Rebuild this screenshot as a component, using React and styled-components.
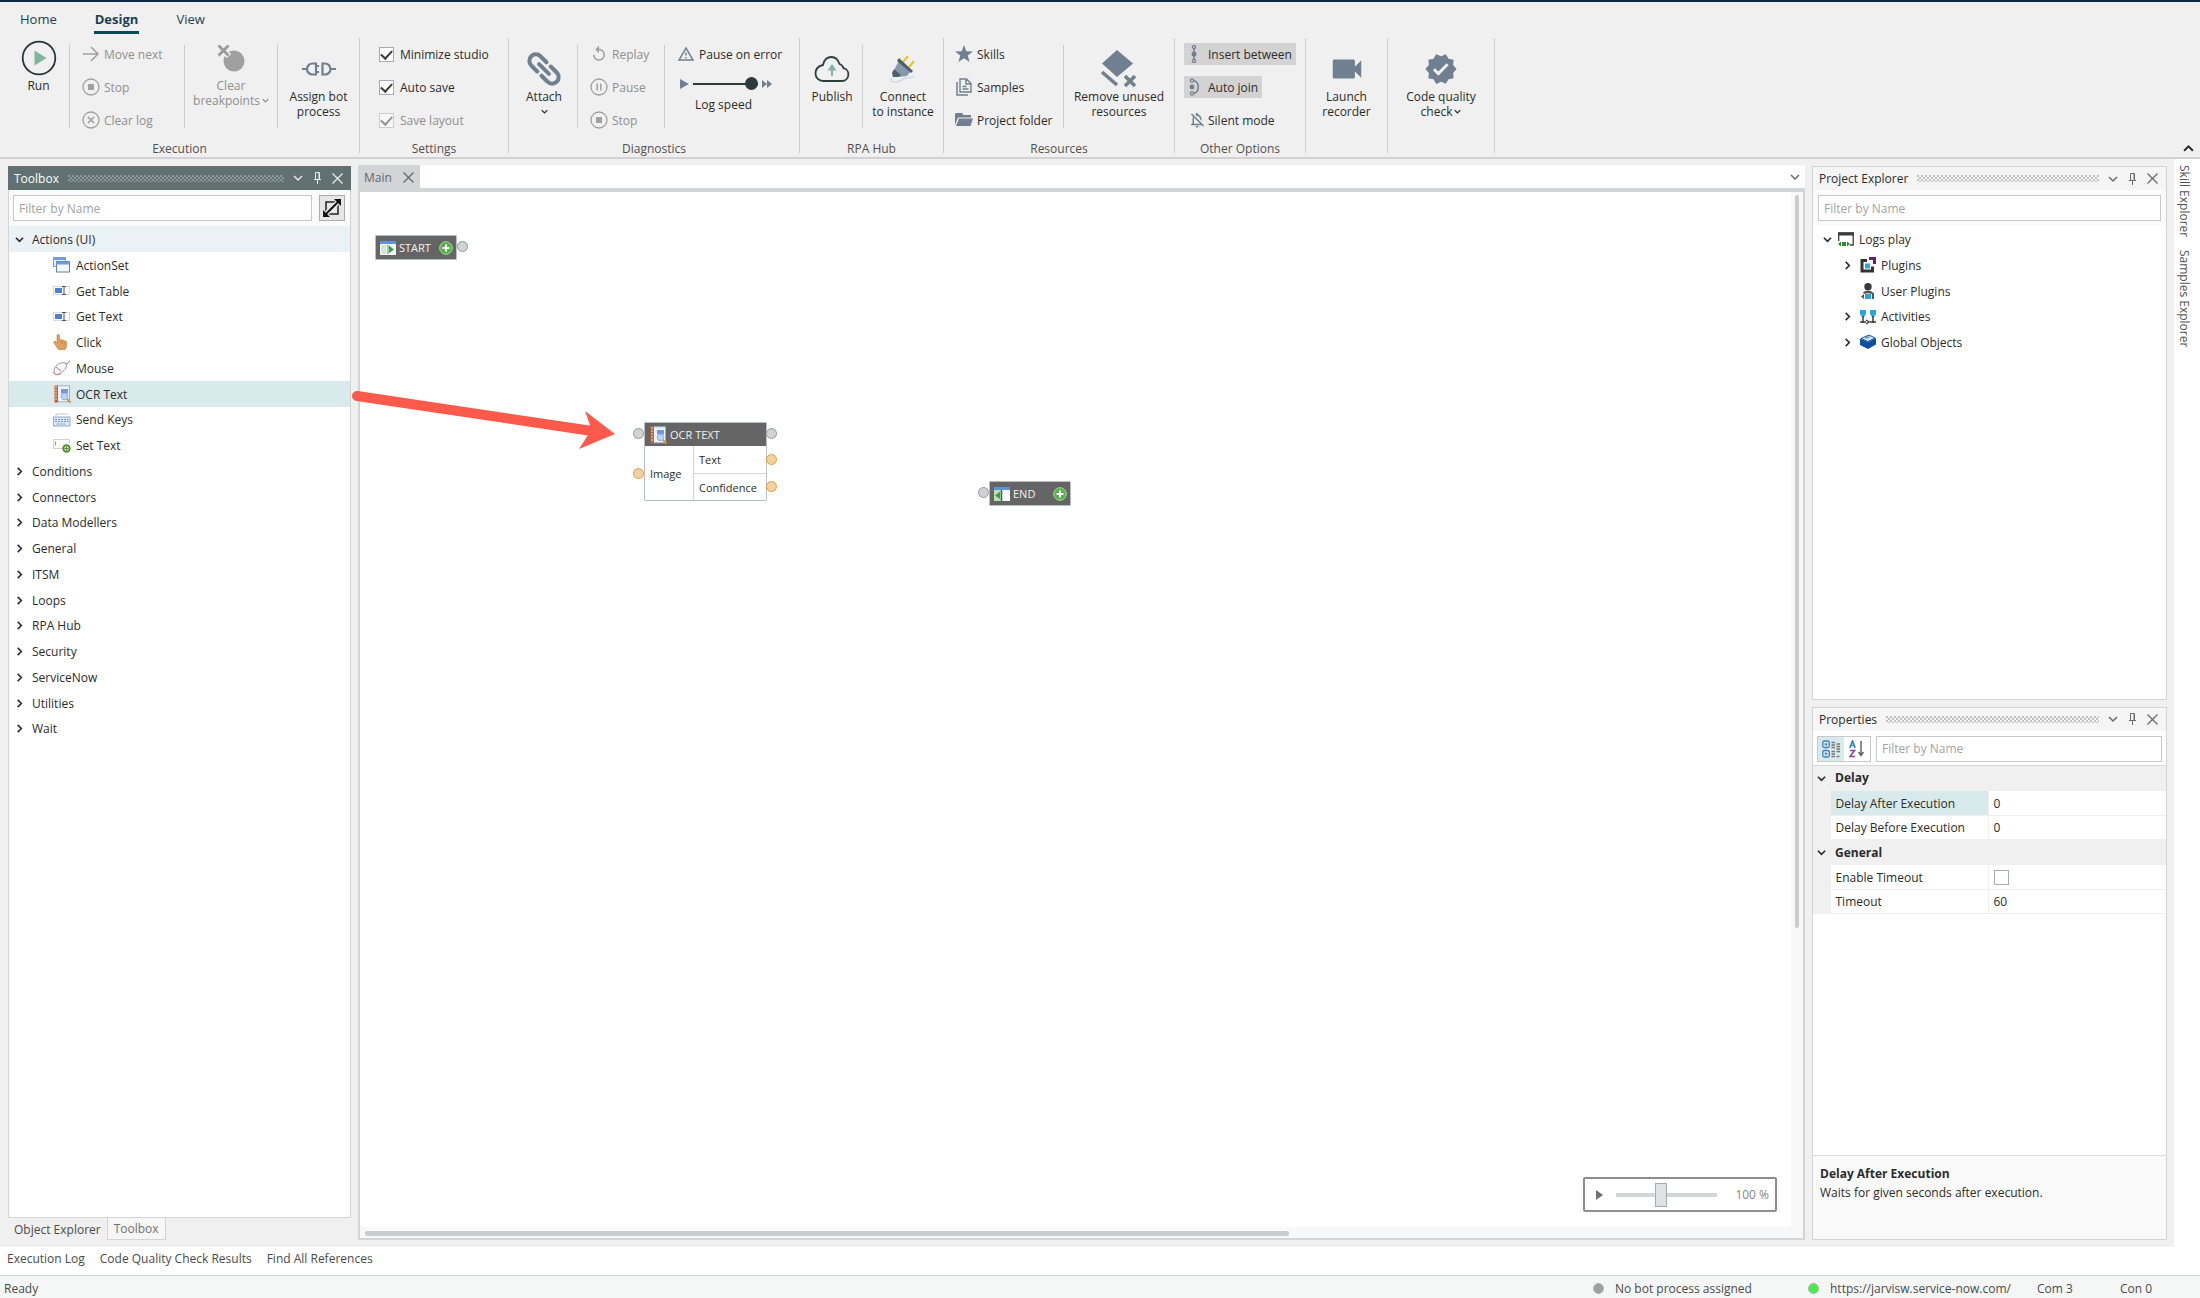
import React from 'react';
import styled, { createGlobalStyle } from 'styled-components';
import { MdVideocam, MdVerified, MdReplay, MdOutlineNotificationsOff, MdOutlineWarningAmber } from 'react-icons/md';

const Colors = {
    chrome: '#f0f0f0',
    rule: '#cdcdcf',
    border: '#d3d4d6',
    slate: '#708090',
    ink: '#2b2b2b',
    muted: '#8f8f8f',
    select: '#d9eaed',
};

const GlobalStyle = createGlobalStyle`
    * {
        box-sizing: border-box;
    }

    body {
        margin: 0;
        background: ${Colors.chrome};
        color: ${Colors.ink};
        font-family: 'Open Sans', 'Noto Sans', sans-serif;
        font-size: 12px;
        line-height: 15px;
    }

    button, input {
        font: inherit;
        color: inherit;
        margin: 0;
    }

    button {
        padding: 0;
        border: 0;
        background: none;
        white-space: nowrap;
    }

    svg {
        display: block;
        flex-shrink: 0;
    }
`;

const Page = styled.div`
    display: flex;
    flex-direction: column;
    min-height: 100vh;
    border-top: 2px solid #0b2942;
`;

/* ---------- ribbon ---------- */

const TabBar = styled.nav`
    display: flex;
    gap: 36px;
    height: 36px;
    padding: 4px 19px 0;
`;

const RibbonTab = styled.button`
    height: 28px;
    padding: 0 1px;
    font-size: 13px;
    line-height: 22px;
    color: #1f3f52;
    font-weight: ${props => props.$active ? 700 : 400};
    border-bottom: 3px solid ${props => props.$active ? '#06495a' : 'transparent'};
`;

const Ribbon = styled.div`
    display: flex;
    height: 121px;
    border-bottom: 2px solid #d2d2d2;
`;

const Spacer = styled.div`
    flex: 1;
`;

const GroupBox = styled.section`
    display: flex;
    flex-direction: column;
`;

const GroupBody = styled.div`
    display: flex;
    height: 103px;
`;

const GroupLabel = styled.div`
    line-height: 16px;
    text-align: center;
    font-size: 12px;
    color: #505050;
`;

const GroupRule = styled.div`
    width: 1px;
    height: 115px;
    background: ${Colors.rule};
`;

const InnerRule = styled.div`
    width: 1px;
    height: 83px;
    margin-top: 7px;
    background: ${Colors.rule};
`;

const Stack = styled.div`
    display: flex;
    flex-direction: column;
    align-items: flex-start;
    gap: 11px;
    width: ${props => props.$width}px;
    padding: 5px 0 0 ${props => props.$inset}px;
`;

const Command = styled.button`
    display: flex;
    align-items: center;
    gap: ${props => props.$toggle ? 2 : 4}px;
    height: 22px;
    padding: ${props => props.$toggle ? '0 4px' : '0'};
    background: ${props => props.$pressed ? '#d3d3d3' : 'transparent'};
    color: ${props => props.disabled ? Colors.muted : Colors.ink};

    svg {
        width: 18px;
        height: 18px;
        color: ${props => props.disabled ? '#a0a0a0' : Colors.slate};
    }
`;

const BigCommand = styled.button`
    display: flex;
    flex-direction: column;
    align-items: center;
    width: ${props => props.$width}px;
    padding-top: ${props => props.$low ? 11 : 0}px;
    padding-left: ${props => props.$inset || 0}px;
    color: ${props => props.disabled ? Colors.muted : Colors.ink};
`;

const BigIcon = styled.span`
    display: flex;
    align-items: center;
    justify-content: center;
    height: 40px;
    color: ${Colors.slate};
`;

const BigLine = styled.span`
    display: flex;
    align-items: center;
    gap: 2px;
    height: 15px;
`;

const CheckLabel = styled.label`
    display: flex;
    align-items: center;
    gap: 6px;
    height: 22px;
    color: ${props => props.$disabled ? Colors.muted : Colors.ink};
`;

const CheckBox = styled.input`
    appearance: none;
    display: flex;
    align-items: center;
    justify-content: center;
    width: 15px;
    height: 15px;
    border: 1px solid #a9abb3;
    background: #fff;

    &:checked::after {
        content: '';
        width: 9px;
        height: 5px;
        border-left: 2px solid #3a3a3a;
        border-bottom: 2px solid #3a3a3a;
        transform: translateY(-1px) rotate(-47deg);
    }

    &:disabled {
        opacity: 0.5;
    }
`;

const SpeedRow = styled.div`
    display: flex;
    align-items: center;
    gap: 4px;
    height: 15px;
    margin-left: 3px;
`;

const SpeedRange = styled.input`
    appearance: none;
    width: 65px;
    height: 13px;
    background: linear-gradient(#2d3d3d, #2d3d3d) center / 100% 2px no-repeat;

    &::-webkit-slider-thumb {
        appearance: none;
        width: 13px;
        height: 13px;
        border-radius: 50%;
        background: #2c3b3c;
    }
`;

const SpeedLabel = styled.label`
    padding-left: 18px;
    margin-top: -5px;
`;

const Collapse = styled.button`
    align-self: flex-end;
    padding: 0 6px 3px;
`;

/* ---------- docked panels ---------- */

const WorkArea = styled.main`
    position: relative;
    display: flex;
    flex: 1;
    gap: 7px;
    padding-left: 8px;
`;

const SideColumn = styled.div`
    display: flex;
    flex-direction: column;
    gap: ${props => props.$gap}px;
    width: ${props => props.$width}px;
    padding: 7px 0;
`;

const PanelBox = styled.section`
    display: flex;
    flex-direction: column;
    flex: 1 1 0;
    border: 1px solid ${Colors.border};
    background: #fff;
`;

const PanelHead = styled.header`
    display: flex;
    align-items: center;
    gap: 9px;
    height: ${props => props.$active ? 24 : 23}px;
    margin: ${props => props.$active ? '-1px -1px 0' : '0'};
    padding: 0 8px 0 6px;
    background: ${props => props.$active ? '#617172' : '#f5f5f5'};
    color: ${props => props.$active ? '#fff' : Colors.ink};
`;

const Grip = styled.div`
    flex: 1;
    height: 7px;
    background-image:
        radial-gradient(circle at 1px 1px, ${props => props.$tone} 0.5px, transparent 1px),
        radial-gradient(circle at 1px 1px, ${props => props.$tone} 0.5px, transparent 1px);
    background-size: 4px 4px;
    background-position: 0 0, 2px 2px;
`;

const HeadButtons = styled.div`
    display: flex;
    align-items: center;
    gap: 10px;
    color: ${props => props.$active ? '#e6eaea' : '#6b6b6b'};
`;

const FilterBar = styled.div`
    display: flex;
    gap: 7px;
    padding: 5px 5px 5px ${props => props.$start}px;
    background: #fafafa;
`;

const FilterInput = styled.input`
    flex: 1;
    min-width: 0;
    height: 26px;
    padding: 0 5px;
    border: 1px solid #c6c8ca;
    background: #fff;

    &::placeholder {
        color: #a3a3a3;
    }
`;

const SquareButton = styled.button`
    display: flex;
    align-items: center;
    justify-content: center;
    width: 26px;
    height: 26px;
    border: 1px solid #adadad;
    background: #e6e6e6;
`;

const Tree = styled.ul`
    display: flex;
    flex-direction: column;
    flex: 1;
    margin: 0;
    padding: 0;
    list-style: none;
`;

const TreeItem = styled.li`
    height: 26px;

    &:nth-child(4n) {
        height: 25px;
    }
`;

const TreeRow = styled.button`
    display: flex;
    align-items: center;
    gap: 5px;
    width: 100%;
    height: 100%;
    padding-left: ${props => props.$inset}px;
    background: ${props => props.$tone || 'transparent'};
`;

const Twisty = styled.span`
    display: flex;
    align-items: center;
    justify-content: center;
    width: 12px;
    margin-right: ${props => props.$near ? 0 : 2}px;
`;

const DockTabs = styled.div`
    display: flex;
    height: 22px;
`;

const DockTab = styled.button`
    padding: 0 6px;
    color: ${props => props.$active ? '#707070' : '#4a4a4a'};
    background: ${props => props.$active ? '#f6f6f6' : 'transparent'};
    border: ${props => props.$active ? `1px solid ${Colors.border}` : '0'};
    border-top: 0;
`;

/* ---------- document ---------- */

const Document = styled.section`
    display: flex;
    flex-direction: column;
    flex: 1;
    min-width: 0;
    padding: 6px 0 7px;
`;

const DocTabs = styled.div`
    display: flex;
    align-items: center;
    justify-content: space-between;
    height: 23px;
    padding-right: 5px;
    background: #fff;
    color: #666;
`;

const DocTab = styled.button`
    display: flex;
    align-items: center;
    gap: 11px;
    height: 23px;
    padding: 2px 6px 0;
    background: #d3d4d8;
`;

const DocBody = styled.div`
    display: grid;
    grid-template: 1fr 11px / 1fr 12px;
    flex: 1;
    border: 2px solid ${Colors.border};
    border-top-width: 4px;
    background: #f8f8f8;
`;

const Canvas = styled.div`
    position: relative;
    background: #fff;
`;

const VerticalTrack = styled.div`
    padding: 3px 4px 0;
`;

const VerticalThumb = styled.div`
    height: 71%;
    border-radius: 2px;
    background: #cbcbcb;
`;

const HorizontalTrack = styled.div`
    padding: 4px 5px 2px;
`;

const HorizontalThumb = styled.div`
    width: 65%;
    height: 5px;
    border-radius: 3px;
    background: #cbcbcb;
`;

const Node = styled.div`
    position: absolute;
    left: ${props => props.$x}px;
    top: ${props => props.$y}px;
    width: ${props => props.$width}px;
    border: 1px solid #b9bec0;
    border-radius: 1px;
    background: #fff;
    font-size: 11px;
`;

const NodeHead = styled.div`
    display: flex;
    align-items: center;
    gap: 3px;
    height: 23px;
    padding: 0 3px 0 4px;
    background: #656565;
    color: #f2f2f2;
`;

const NodeTitle = styled.span`
    flex: 1;
`;

const NodeBody = styled.div`
    display: grid;
    grid-template-columns: 49px 1fr;
`;

const NodeInput = styled.div`
    display: flex;
    align-items: center;
    padding-left: 5px;
    border-right: 1px solid ${Colors.border};
`;

const NodeOutput = styled.div`
    height: 27px;
    padding-left: 5px;
    line-height: 27px;

    & + & {
        border-top: 1px solid ${Colors.border};
    }
`;

const Port = styled.span`
    position: absolute;
    left: ${props => props.$x}px;
    top: ${props => props.$y}px;
    width: 11px;
    height: 11px;
    border: 1px solid ${props => props.$data ? '#e5a33d' : '#9a9c9c'};
    border-radius: 50%;
    background: ${props => props.$data ? '#f4cf9f' : '#d0d3d3'};
`;

const ZoomBox = styled.div`
    position: absolute;
    right: 14px;
    bottom: 15px;
    display: flex;
    align-items: center;
    gap: 12px;
    height: 35px;
    padding: 0 6px 0 11px;
    border: 2px solid #8d8d8d;
    border-radius: 2px;
    background: #fff;
    color: #858585;
`;

const ZoomRange = styled.input`
    appearance: none;
    width: 101px;
    height: 24px;
    background: linear-gradient(#d3d5d6, #d3d5d6) center / 100% 4px no-repeat;

    &::-webkit-slider-thumb {
        appearance: none;
        width: 12px;
        height: 24px;
        border: 1px solid #a9abad;
        background: #e0e1e3;
    }
`;

const ZoomValue = styled.output`
    width: 40px;
    text-align: right;
`;

const Arrow = styled.svg`
    position: absolute;
    left: 352px;
    top: 231px;
    pointer-events: none;
`;

/* ---------- properties ---------- */

const SortButtons = styled.div`
    display: flex;
    width: 54px;
    height: 26px;
    border: 1px solid #c6c8ca;
`;

const SortButton = styled.button`
    display: flex;
    align-items: center;
    justify-content: center;
    flex: 1;
    background: ${props => props.$active ? Colors.select : '#fff'};
`;

const PropBar = styled.div`
    display: flex;
    gap: 5px;
    padding: 5px 4px 3px;
    border-bottom: 1px solid #d6d7d9;
`;

const PropTable = styled.table`
    width: 100%;
    table-layout: fixed;
    border-collapse: collapse;

    tr {
        height: 25px;
    }

    tr:nth-child(3n) {
        height: 24px;
    }

    th, td {
        padding: 0 0 0 5px;
        text-align: left;
        font-weight: 400;
    }
`;

const GutterCol = styled.col`
    width: 17px;
`;

const NameCol = styled.col`
    width: 158px;
`;

const Gutter = styled.td`
    background: ${Colors.chrome};
`;

const CategoryCell = styled.th`
    && {
        font-weight: 700;
        background: ${Colors.chrome};
    }
`;

const ToggleCell = styled.td`
    && {
        padding-left: 4px;
        background: ${Colors.chrome};
    }
`;

const PropName = styled.th`
    background: ${props => props.$active ? Colors.select : '#fff'};
    border: 1px solid #efefef;
`;

const PropValue = styled.td`
    border: 1px solid #efefef;
    border-right: 0;
`;

const ValueInput = styled.input`
    width: 100%;
    height: 20px;
    padding: 0;
    border: 0;
    background: transparent;
`;

const PropHelp = styled.div`
    height: 84px;
    margin-top: auto;
    padding: 8px 7px;
    line-height: 19px;
    border-top: 1px solid #dcdddf;
    background: #f9f9f9;
`;

const RightStrip = styled.aside`
    display: flex;
    flex-direction: column;
    align-items: flex-start;
    gap: 13px;
    width: 26px;
    padding: 6px 0 0 1px;
    background: #fff;
`;

const StripTab = styled.button`
    writing-mode: vertical-rl;
    line-height: 18px;
    color: #555;
`;

/* ---------- bottom bars ---------- */

const OutputTabs = styled.div`
    display: flex;
    gap: 15px;
    height: 28px;
    padding: 0 7px 5px;
    background: #fff;
    color: #4a4a4a;
`;

const StatusBar = styled.footer`
    display: flex;
    align-items: center;
    height: 23px;
    padding: 2px 44px 0 4px;
    border-top: 1px solid #cfd2d2;
    background: #f5f7f7;
    color: #4a4a4a;
`;

const StatusItem = styled.div`
    display: flex;
    align-items: center;
    gap: 11px;
    width: ${props => props.$width}px;
    white-space: nowrap;
`;

const StatusDot = styled.span`
    width: 11px;
    height: 11px;
    border: 1px solid #b5b5b5;
    border-radius: 50%;
    background: ${props => props.$color};
`;

const StatusLink = styled.a`
    color: inherit;
    text-decoration: none;
`;

/* ---------- small glyphs ---------- */

const Glyph = ({ size = 16, w, h, box, children, ...rest }) => (
    <svg width={w || size} height={h || size} viewBox={box || `0 0 ${w || size} ${h || size}`} fill="none" aria-hidden="true" {...rest}>
        {children}
    </svg>
);

const Chevron = ({ dir = 'down', size = 10, width = 1.8 }) => {
    const paths = { down: 'M1 3l4 4 4-4', up: 'M1 7l4-4 4 4', right: 'M3 1l4 4-4 4' };
    return <Glyph size={size} box="0 0 10 10"><path d={paths[dir]} stroke="currentColor" strokeWidth={width} /></Glyph>;
};

const Cross = () => <Glyph size={11}><path d="M.5.5l10 10M10.500.5l-10 10" stroke="currentColor" strokeWidth="1.3" /></Glyph>;

const Pin = () => (
    <Glyph w={9} h={12}>
        <path d="M2.5 7V.5h4V7M1 7.5h7M4.5 8v4" stroke="currentColor" />
        <path d="M6 1v6" stroke="currentColor" />
    </Glyph>
);

const NextIcon = () => <Glyph size={18}><path d="M1 9h15M9 2l7 7-7 7" stroke="currentColor" strokeWidth="1.6" /></Glyph>;

const StopIcon = () => (
    <Glyph size={18}>
        <circle cx="9" cy="9" r="8" stroke="currentColor" strokeWidth="1.3" />
        <rect x="6" y="6" width="6" height="6" fill="currentColor" />
    </Glyph>
);

const ClearIcon = () => (
    <Glyph size={18}>
        <circle cx="9" cy="9" r="8" stroke="currentColor" strokeWidth="1.3" />
        <path d="M6 6l6 6M12 6l-6 6" stroke="currentColor" strokeWidth="1.6" />
    </Glyph>
);

const PauseIcon = () => (
    <Glyph size={18}>
        <circle cx="9" cy="9" r="8" stroke="currentColor" strokeWidth="1.3" />
        <path d="M7.2 5.5v7M10.8 5.5v7" stroke="currentColor" strokeWidth="1.5" />
    </Glyph>
);

const RunIcon = () => (
    <Glyph size={36}>
        <circle cx="18" cy="18" r="16.3" stroke="#263638" strokeWidth="1.8" />
        <path d="M13.5 10.5v15l12-7.5z" fill="#7fb5a0" />
    </Glyph>
);

const BreakpointIcon = () => (
    <Glyph w={28} h={28}>
        <circle cx="17" cy="17" r="10.500" fill="#a0a0a0" />
        <path d="M1 1l11 11M12 1L1 12" stroke="#f0f0f0" strokeWidth="6" />
        <path d="M1.5 1.5l10 10M11.5 1.5l-10 10" stroke="#999" strokeWidth="2.8" />
    </Glyph>
);

const AssignIcon = () => (
    <Glyph w={34} h={16}>
        <path d="M0 8h6M28 8h6M13 5h4M13 11h4" stroke={Colors.slate} strokeWidth="2.2" />
        <path d="M14 2.500h-3.500a5.500 5.500 0 0 0 0 11H14z" stroke={Colors.slate} strokeWidth="2.2" />
        <path d="M20.500 2.500H23a5.500 5.500 0 0 1 0 11h-2.500z" stroke={Colors.slate} strokeWidth="2.2" />
    </Glyph>
);

const AttachIcon = () => (
    <Glyph size={38}>
        <g transform="rotate(45 19 19)" stroke={Colors.slate} strokeWidth="4" strokeLinecap="round">
            <path d="M16 12.500H7.500a6.500 6.500 0 0 0 0 13H16" />
            <path d="M22 12.500h8.500a6.500 6.500 0 0 1 0 13H22" />
            <path d="M12 19h14" />
        </g>
    </Glyph>
);

const PublishIcon = () => (
    <Glyph w={36} h={28}>
        <path d="M9 26h19a6.500 6.500 0 0 0 1.500-12.800A6 6 0 0 0 25.500 9C24 4.500 21.500 2 17.500 2 13 2 10 5 9 10c-4.500 1-7.500 4-7.500 8.500C1.500 23 5 26 9 26z" stroke="#2b3f41" strokeWidth="1.8" />
        <path d="M18 21V12" stroke="#7fb5a0" strokeWidth="2" />
        <path d="M13.500 15.500L18 9l4.500 6.500z" fill="#7fb5a0" />
    </Glyph>
);

const PlugIcon = () => (
    <Glyph w={26} h={28}>
        <path d="M13 7l5-6M19 12l5-6" stroke="#fbbf1d" strokeWidth="2.2" />
        <path d="M9 6l11 11-3 4-8 1-5-4 1-5z" fill="#8798a8" />
        <path d="M9 3l14 13-2 2L7 6z" fill="#4d5f6d" />
        <path d="M4 14l7 6-3 2H3l-1-4z" fill="#4d5f6d" />
        <path d="M3 22c-3 3-3 5 2 5 7 0 9-5.500 14-4.500 2 .5 2.500-.5 5-1" stroke="#cbdbe4" strokeWidth="1.5" />
    </Glyph>
);

const LayersIcon = () => (
    <Glyph w={36} h={38}>
        <path d="M16 0l16 13.500L16 27 1 13.500z" fill={Colors.slate} />
        <path d="M1 22l15 13" stroke={Colors.slate} strokeWidth="3.6" />
        <path d="M24 26l10 10M34 26L24 36" stroke={Colors.slate} strokeWidth="3.6" />
    </Glyph>
);

const StarIcon = () => <Glyph size={18}><path d="M9 0l2.300 6.300 6.700.2-5.300 4.100 1.900 6.500L9 13.300l-5.600 3.800 1.900-6.500L0 6.500l6.700-.2z" fill="currentColor" /></Glyph>;

const SamplesIcon = () => (
    <Glyph size={18}>
        <path d="M5 1h6.500L16 5.500V14H5zM11 1v5h5" stroke="currentColor" strokeWidth="1.4" />
        <path d="M2 4v13h11" stroke="currentColor" strokeWidth="1.5" />
        <path d="M7.500 8.500h4M7.500 11h6" stroke="currentColor" strokeWidth="1.3" />
    </Glyph>
);

const FolderIcon = () => (
    <Glyph size={18}>
        <path d="M0 14V3l1-1h6l1.500 2H16v2.500H3z" fill="currentColor" />
        <path d="M4 7.500h14L15.500 15H1z" fill="currentColor" />
    </Glyph>
);

const BetweenIcon = () => (
    <Glyph size={18}>
        <path d="M6 3v12" stroke="currentColor" strokeWidth="1.5" />
        <circle cx="6" cy="2" r="1.6" fill="#d3d3d3" stroke="currentColor" strokeWidth="1.3" />
        <circle cx="6" cy="9" r="2.5" fill="currentColor" />
        <circle cx="6" cy="16" r="1.6" fill="#d3d3d3" stroke="currentColor" strokeWidth="1.3" />
    </Glyph>
);

const JoinIcon = () => (
    <Glyph size={18}>
        <path d="M5 2.500c7 1 7 12 0 13" stroke="currentColor" strokeWidth="1.5" />
        <circle cx="4" cy="2.500" r="1.7" fill="#d3d3d3" stroke="currentColor" strokeWidth="1.2" />
        <circle cx="4" cy="9" r="2.4" fill="currentColor" />
        <circle cx="4" cy="15.500" r="1.7" fill="#d3d3d3" stroke="currentColor" strokeWidth="1.2" />
    </Glyph>
);

const ExpandIcon = () => (
    <Glyph size={18}>
        <rect x="3" y="3" width="12" height="12" stroke="#222" strokeWidth="1.5" />
        <path d="M3 15L15 3" stroke="#e6e6e6" strokeWidth="5" />
        <path d="M3 15L15 3" stroke="#111" strokeWidth="2" />
        <path d="M11 0h7v7zM0 11v7h7z" fill="#111" />
    </Glyph>
);

/* toolbox icons */

const ActionSetIcon = () => (
    <Glyph w={18} h={16}>
        <rect x=".5" y=".5" width="12" height="9" fill="#e8f0fb" stroke="#7a9fd4" />
        <path d="M0 2h13" stroke="#6f9be0" strokeWidth="2" />
        <rect x="3.500" y="4.500" width="13" height="10.500" fill="#f3f7fd" stroke="#5d82b8" />
        <path d="M3.500 6h13" stroke="#6f9be0" strokeWidth="3" />
    </Glyph>
);

const FieldIcon = () => (
    <Glyph w={18} h={16}>
        <rect x=".5" y="3.500" width="16" height="8" fill="#fafafa" stroke="#d6dade" />
        <rect x="2" y="5" width="7" height="5" fill="#4b7fd1" />
        <path d="M9 3.500h4M11 4v7M9 11.500h4" stroke="#555" />
    </Glyph>
);

const HandIcon = () => (
    <Glyph w={18} h={16}>
        <path d="M4 1.500C4 0 6.500 0 6.500 1.500V6c1-.8 2.200-.4 2.500.3.800-.5 2-.3 2.300.6 1-.4 2.200 0 2.200 1.300V12c0 2.500-1.500 4-4 4H7.500c-2 0-3-1.500-3.800-3L1 9c-.8-1.500 1-2.300 2-1.200L4 9z" fill="#dfa063" stroke="#b87635" strokeWidth=".6" />
        <path d="M8.800 7v3M11.200 8v2.500" stroke="#b87635" strokeWidth=".6" />
    </Glyph>
);

const MouseIcon = () => (
    <Glyph w={18} h={16}>
        <path d="M1 10C2 5 8 1.500 12 3c3 1.500 1 6-2 8.500S2 16 1 13z" fill="#f6f6f6" stroke="#9a9a9a" />
        <path d="M1 12c0 3 4 3.500 7 1.500" stroke="#df7068" />
        <path d="M12 3.500c2-1 2 1 3 0s-.5-2 2-2.500M3 7l5 4" stroke="#888" />
    </Glyph>
);

const OcrIcon = () => (
    <Glyph w={18} h={18}>
        <rect x="4.500" y=".8" width="12" height="16" fill="#eef3fa" stroke="#9eb2cc" />
        <rect x="1.500" y=".5" width="3.500" height="17" fill="#c1622f" />
        <path d="M2 2h2M2 5h2M2 8h2M2 11h2M2 14h2" stroke="#f3d7c4" />
        <rect x="8" y="4" width="7" height="4.500" fill="#6d9be0" />
        <circle cx="11.500" cy="11.500" r="3.300" fill="#b9d4f5" stroke="#8fb0df" />
        <path d="M14 14l3.500 3.500" stroke="#d99040" strokeWidth="2" />
    </Glyph>
);

const KeysIcon = () => (
    <Glyph w={18} h={16}>
        <path d="M3 4V2h12" stroke="#c2c6cc" />
        <rect x=".5" y="5" width="16.500" height="9" fill="#dbe7f6" stroke="#90abd3" />
        <path d="M2 7.500h13.500M2 9.500h13.500M4 12h9" stroke="#6f95cc" strokeDasharray="2 1" />
    </Glyph>
);

const SetTextIcon = () => (
    <Glyph w={18} h={16}>
        <path d="M10 11.500H.5v-9h16V6" stroke="#cfd3d6" fill="#fafafa" />
        <path d="M2.500 4.500v4" stroke="#999" />
        <circle cx="13.500" cy="11.500" r="3.200" fill="#fff" stroke="#4f8f2f" strokeWidth="2" />
        <path d="M13.500 9.500v4M11.500 11.500h4" stroke="#4f8f2f" />
    </Glyph>
);

/* project tree icons */

const ProjectIcon = () => (
    <Glyph w={16} h={14}>
        <path d="M.700 9V1h14.500v12H12" stroke="#3c3c3c" strokeWidth="1.3" />
        <path d="M0 2h16" stroke="#3c3c3c" strokeWidth="3" />
        <path d="M0 12l3-2.500v5zM12 12L9 9.500v5zM4 10h4v4H4z" fill="#2b8a2b" />
    </Glyph>
);

const PluginIcon = () => (
    <Glyph size={16}>
        <path d="M7 3.500H2V14h10.500V9.500" stroke="#333" strokeWidth="3" />
        <rect x="5" y="6.500" width="5" height="5" fill="#2aa4e8" />
        <path d="M9 1.500h5.500V7" stroke="#68217a" strokeWidth="3" />
    </Glyph>
);

const UserPluginIcon = () => (
    <Glyph size={16}>
        <circle cx="8" cy="3.700" r="3.700" fill="#3a3a3a" />
        <path d="M4 10.500c1-2 7-2 8 0" stroke="#555" strokeWidth="2.5" />
        <path d="M4 11l-3 2.500 3 2.500zM12 10v6h2v-6z" fill="#555" />
        <rect x="5" y="11" width="6" height="5" fill="#2aa4e8" />
    </Glyph>
);

const ActivityIcon = () => (
    <Glyph size={16}>
        <path d="M0 1h6v4L4 8H2L0 5zM10 1h6v4l-2 3h-2l-2-3z" fill="#2aa4e8" />
        <path d="M3 7v7M13 7v7M0 13h6M10 13h6M6 11l3 2-3 2" stroke="#3a3a3a" strokeWidth="1.5" />
    </Glyph>
);

const GlobalIcon = () => (
    <Glyph size={16}>
        <path d="M0 4.500L8 8l8-4v6.500L8 15l-8-4z" fill="#0b4f9e" />
        <path d="M1 4.500L9 1l6 3-7 3.500z" fill="#e4eefa" stroke="#0b4f9e" />
        <path d="M4 4l4-2 3 1-4 2z" fill="#0b4f9e" opacity="0.5" />
    </Glyph>
);

/* canvas icons */

const StartIcon = () => (
    <Glyph w={16} h={14}>
        <rect width="16" height="14" fill="#f7fbff" />
        <rect width="16" height="3" fill="#5b93dd" />
        <rect x="1" y="4" width="5" height="9" fill="#cfe8cb" />
        <path d="M8 4v9" stroke="#3e9a3e" />
        <path d="M9 4.500L14 8.500 9 12z" fill="#3e9a3e" />
    </Glyph>
);

const EndIcon = () => (
    <Glyph w={16} h={14}>
        <rect width="16" height="14" fill="#f7fbff" />
        <rect width="16" height="3" fill="#5b93dd" />
        <rect y="3" width="7" height="11" fill="#b9dfb4" />
        <path d="M6 4.500L1 8.500 6 12z" fill="#3e9a3e" />
        <path d="M7.500 3v11" stroke="#555" strokeWidth="1.5" />
    </Glyph>
);

const AddIcon = () => (
    <Glyph size={14}>
        <circle cx="7" cy="7" r="6.300" fill="#58b04c" stroke="#a5dc9b" />
        <path d="M7 3.500v7M3.500 7h7" stroke="#fff" strokeWidth="2" />
    </Glyph>
);

const CategoryIcon = () => (
    <Glyph size={18}>
        <rect x=".8" y="1" width="6.500" height="6.500" rx="1.500" stroke="#4080c0" strokeWidth="1.3" />
        <rect x=".8" y="10.500" width="6.500" height="6.500" rx="1.500" stroke="#4080c0" strokeWidth="1.3" />
        <path d="M2.500 4.250h3M4 2.750v3M2.500 13.750h3M4 12.250v3" stroke="#4080c0" />
        <path d="M9.500 2.500h3.500M9.500 5h3.500M9.500 7.500h3.500M9.500 11.500h3.500M9.500 14h3.500M9.500 16.500h3.500M14.500 4h3.500M14.500 6.500h3.500M14.500 9h3.500M14.500 11.500h3.500M14.500 16.500h3" stroke="#777" strokeWidth="1.3" />
    </Glyph>
);

const SortIcon = () => (
    <Glyph w={16} h={18}>
        <path d="M.8 8L3.500.8 6.200 8M1.800 5.500h3.500" stroke="#3d7fc1" strokeWidth="1.6" />
        <path d="M1 10.500h4.500L1 16.500h5" stroke="#8e44ad" strokeWidth="1.6" />
        <path d="M12 1v14M9.500 12l2.500 3.500 2.500-3.500" stroke="#666" strokeWidth="1.5" />
    </Glyph>
);

/* ---------- parts ---------- */

const Group = ({ label, children }) => (
    <>
        <GroupBox>
            <GroupBody>{children}</GroupBody>
            {label && <GroupLabel>{label}</GroupLabel>}
        </GroupBox>
        <GroupRule />
    </>
);

const Big = ({ icon, lines, width, inset, low, disabled, menu }) => (
    <BigCommand $width={width} $inset={inset} $low={low} disabled={disabled}>
        <BigIcon>{icon}</BigIcon>
        {lines.map((line, i) => (
            <BigLine key={line}>
                {line}
                {menu && i === lines.length - 1 && <Chevron size={7} />}
            </BigLine>
        ))}
    </BigCommand>
);

const Header = ({ title, active }) => (
    <PanelHead $active={active}>
        {title}
        <Grip $tone={active ? '#a9b4b4' : '#9c9c9c'} />
        <HeadButtons $active={active}>
            <button aria-label="Window position"><Chevron width={1.5} /></button>
            <button aria-label="Auto hide"><Pin /></button>
            <button aria-label="Close"><Cross /></button>
        </HeadButtons>
    </PanelHead>
);

const actions = [
    ['ActionSet', ActionSetIcon],
    ['Get Table', FieldIcon],
    ['Get Text', FieldIcon],
    ['Click', HandIcon],
    ['Mouse', MouseIcon],
    ['OCR Text', OcrIcon],
    ['Send Keys', KeysIcon],
    ['Set Text', SetTextIcon],
];

const categories = [
    'Conditions', 'Connectors', 'Data Modellers', 'General', 'ITSM', 'Loops',
    'RPA Hub', 'Security', 'ServiceNow', 'Utilities', 'Wait',
];

const projectItems = [
    ['Plugins', PluginIcon, true],
    ['User Plugins', UserPluginIcon, false],
    ['Activities', ActivityIcon, true],
    ['Global Objects', GlobalIcon, true],
];

const properties = [
    { name: 'Delay', rows: [['Delay After Execution', '0'], ['Delay Before Execution', '0']] },
    { name: 'General', rows: [['Enable Timeout', false], ['Timeout', '60']] },
];

const RibbonBar = () => (
    <Ribbon>
        <Group label="Execution">
            <Big icon={<RunIcon />} lines={['Run']} width={69} inset={8} />
            <InnerRule />
            <Stack $width={114} $inset={12}>
                <Command disabled><NextIcon />Move next</Command>
                <Command disabled><StopIcon />Stop</Command>
                <Command disabled><ClearIcon />Clear log</Command>
            </Stack>
            <InnerRule />
            <Big icon={<BreakpointIcon />} lines={['Clear', 'breakpoints']} width={92} disabled menu />
            <InnerRule />
            <Big icon={<AssignIcon />} lines={['Assign bot', 'process']} width={81} low />
        </Group>
        <Group label="Settings">
            <Stack $width={148} $inset={19}>
                <CheckLabel><CheckBox type="checkbox" defaultChecked />Minimize studio</CheckLabel>
                <CheckLabel><CheckBox type="checkbox" defaultChecked />Auto save</CheckLabel>
                <CheckLabel $disabled><CheckBox type="checkbox" defaultChecked disabled />Save layout</CheckLabel>
            </Stack>
        </Group>
        <Group label="Diagnostics">
            <BigCommand $width={68} $low $inset={2}>
                <BigIcon><AttachIcon /></BigIcon>
                <BigLine>Attach</BigLine>
                <BigLine><Chevron size={7} /></BigLine>
            </BigCommand>
            <InnerRule />
            <Stack $width={86} $inset={12}>
                <Command disabled><MdReplay />Replay</Command>
                <Command disabled><PauseIcon />Pause</Command>
                <Command disabled><StopIcon />Stop</Command>
            </Stack>
            <InnerRule />
            <Stack $width={134} $inset={12}>
                <Command><MdOutlineWarningAmber />Pause on error</Command>
                <SpeedRow>
                    <Glyph w={9} h={10}><path d="M0 0l9 5-9 5z" fill={Colors.slate} /></Glyph>
                    <SpeedRange id="speed" type="range" min="0" max="10" defaultValue="10" />
                    <Glyph w={10} h={10}><path d="M0 1l5 4-5 4zM5 1l5 4-5 4z" fill={Colors.slate} /></Glyph>
                </SpeedRow>
                <SpeedLabel htmlFor="speed">Log speed</SpeedLabel>
            </Stack>
        </Group>
        <Group label="RPA Hub">
            <Big icon={<PublishIcon />} lines={['Publish']} width={62} inset={2} low />
            <InnerRule />
            <Big icon={<PlugIcon />} lines={['Connect', 'to instance']} width={80} low />
        </Group>
        <Group label="Resources">
            <Stack $width={119} $inset={11}>
                <Command><StarIcon />Skills</Command>
                <Command><SamplesIcon />Samples</Command>
                <Command><FolderIcon />Project folder</Command>
            </Stack>
            <InnerRule />
            <Big icon={<LayersIcon />} lines={['Remove unused', 'resources']} width={110} low />
        </Group>
        <Group label="Other Options">
            <Stack $width={130} $inset={9}>
                <Command $toggle $pressed aria-pressed="true"><BetweenIcon />Insert between</Command>
                <Command $toggle $pressed aria-pressed="true"><JoinIcon />Auto join</Command>
                <Command $toggle><MdOutlineNotificationsOff />Silent mode</Command>
            </Stack>
        </Group>
        <Group>
            <Big icon={<MdVideocam size={38} />} lines={['Launch', 'recorder']} width={81} low />
        </Group>
        <Group>
            <Big icon={<MdVerified size={34} />} lines={['Code quality', 'check']} width={106} low menu />
        </Group>
        <Spacer />
        <Collapse aria-label="Collapse ribbon"><Chevron dir="up" size={11} /></Collapse>
    </Ribbon>
);

const Toolbox = () => (
    <SideColumn $width={343} $gap={0}>
        <PanelBox>
            <Header title="Toolbox" active />
            <FilterBar $start={4}>
                <FilterInput placeholder="Filter by Name" aria-label="Filter toolbox by name" />
                <SquareButton aria-label="Expand all"><ExpandIcon /></SquareButton>
            </FilterBar>
            <Tree>
                <TreeItem>
                    <TreeRow $inset={4} $tone="#ebf2f5"><Twisty><Chevron size={9} /></Twisty>Actions (UI)</TreeRow>
                </TreeItem>
                {actions.map(([name, Icon]) => (
                    <TreeItem key={name}>
                        <TreeRow $inset={44} $tone={name === 'OCR Text' ? Colors.select : null}><Icon />{name}</TreeRow>
                    </TreeItem>
                ))}
                {categories.map(name => (
                    <TreeItem key={name}>
                        <TreeRow $inset={4}><Twisty><Chevron dir="right" size={9} /></Twisty>{name}</TreeRow>
                    </TreeItem>
                ))}
            </Tree>
        </PanelBox>
        <DockTabs>
            <DockTab>Object Explorer</DockTab>
            <DockTab $active>Toolbox</DockTab>
        </DockTabs>
    </SideColumn>
);

const Designer = () => (
    <Document>
        <DocTabs>
            <DocTab>Main<Cross /></DocTab>
            <button aria-label="Open documents"><Chevron width={1.5} /></button>
        </DocTabs>
        <DocBody>
            <Canvas>
                <Node $x={15} $y={43} $width={82}>
                    <NodeHead><StartIcon /><NodeTitle>START</NodeTitle><AddIcon /></NodeHead>
                    <Port $x={81} $y={5} />
                </Node>
                <Node $x={284} $y={230} $width={123}>
                    <NodeHead><OcrIcon /><NodeTitle>OCR TEXT</NodeTitle></NodeHead>
                    <NodeBody>
                        <NodeInput>Image</NodeInput>
                        <div>
                            <NodeOutput>Text</NodeOutput>
                            <NodeOutput>Confidence</NodeOutput>
                        </div>
                    </NodeBody>
                    <Port $x={-12} $y={5} />
                    <Port $x={121} $y={5} />
                    <Port $x={-12} $y={45} $data />
                    <Port $x={121} $y={31} $data />
                    <Port $x={121} $y={58} $data />
                </Node>
                <Node $x={629} $y={289} $width={82}>
                    <NodeHead><EndIcon /><NodeTitle>END</NodeTitle><AddIcon /></NodeHead>
                    <Port $x={-12} $y={5} />
                </Node>
                <ZoomBox>
                    <Glyph w={8} h={10}><path d="M0 0l7 5-7 5z" fill="#707070" /></Glyph>
                    <ZoomRange type="range" min="0" max="100" defaultValue="44" aria-label="Zoom" />
                    <ZoomValue>100 %</ZoomValue>
                </ZoomBox>
            </Canvas>
            <VerticalTrack><VerticalThumb /></VerticalTrack>
            <HorizontalTrack><HorizontalThumb /></HorizontalTrack>
        </DocBody>
    </Document>
);

const ProjectExplorer = () => (
    <PanelBox>
        <Header title="Project Explorer" />
        <FilterBar $start={5}>
            <FilterInput placeholder="Filter by Name" aria-label="Filter project by name" />
        </FilterBar>
        <Tree>
            <TreeItem>
                <TreeRow $inset={8}><Twisty $near><Chevron size={9} /></Twisty><ProjectIcon />Logs play</TreeRow>
            </TreeItem>
            {projectItems.map(([name, Icon, nested]) => (
                <TreeItem key={name}>
                    <TreeRow $inset={28}>
                        <Twisty>{nested && <Chevron dir="right" size={9} />}</Twisty>
                        <Icon />
                        {name}
                    </TreeRow>
                </TreeItem>
            ))}
        </Tree>
    </PanelBox>
);

const Properties = () => (
    <PanelBox>
        <Header title="Properties" />
        <PropBar>
            <SortButtons>
                <SortButton $active aria-label="Categorized"><CategoryIcon /></SortButton>
                <SortButton aria-label="Alphabetical"><SortIcon /></SortButton>
            </SortButtons>
            <FilterInput placeholder="Filter by Name" aria-label="Filter properties by name" />
        </PropBar>
        <PropTable>
            <colgroup>
                <GutterCol />
                <NameCol />
                <col />
            </colgroup>
            <tbody>
                {properties.map(group => (
                    <React.Fragment key={group.name}>
                        <tr>
                            <ToggleCell><Chevron size={9} /></ToggleCell>
                            <CategoryCell colSpan={2}>{group.name}</CategoryCell>
                        </tr>
                        {group.rows.map(([name, value]) => (
                            <tr key={name}>
                                <Gutter />
                                <PropName $active={name === 'Delay After Execution'}>
                                    <label htmlFor={name}>{name}</label>
                                </PropName>
                                <PropValue>
                                    {value === false
                                        ? <CheckBox type="checkbox" id={name} />
                                        : <ValueInput id={name} defaultValue={value} />}
                                </PropValue>
                            </tr>
                        ))}
                    </React.Fragment>
                ))}
            </tbody>
        </PropTable>
        <PropHelp>
            <strong>Delay After Execution</strong>
            <div>Waits for given seconds after execution.</div>
        </PropHelp>
    </PanelBox>
);

const App = () => (
    <Page>
        <GlobalStyle />
        <TabBar>
            <RibbonTab>Home</RibbonTab>
            <RibbonTab $active>Design</RibbonTab>
            <RibbonTab>View</RibbonTab>
        </TabBar>
        <RibbonBar />
        <WorkArea>
            <Toolbox />
            <Designer />
            <SideColumn $width={355} $gap={7}>
                <ProjectExplorer />
                <Properties />
            </SideColumn>
            <RightStrip>
                <StripTab>Skill Explorer</StripTab>
                <StripTab>Samples Explorer</StripTab>
            </RightStrip>
            <Arrow width="264" height="66" viewBox="0 0 264 66">
                <path d="M5 6L240 41" stroke="#fd5a4b" strokeWidth="10" strokeLinecap="round" />
                <path d="M233 21L263 44L227 59L236 45L238 35z" fill="#fd5a4b" />
            </Arrow>
        </WorkArea>
        <OutputTabs>
            <button>Execution Log</button>
            <button>Code Quality Check Results</button>
            <button>Find All References</button>
        </OutputTabs>
        <StatusBar>
            Ready
            <Spacer />
            <StatusItem $width={215}><StatusDot $color="#a0a0a0" />No bot process assigned</StatusItem>
            <StatusItem $width={229}>
                <StatusDot $color="#44f044" />
                <StatusLink href="https://jarvisw.service-now.com/">https://jarvisw.service-now.com/</StatusLink>
            </StatusItem>
            <StatusItem $width={83}>Com 3</StatusItem>
            <StatusItem $width={36}>Con 0</StatusItem>
        </StatusBar>
    </Page>
);

export default App;
